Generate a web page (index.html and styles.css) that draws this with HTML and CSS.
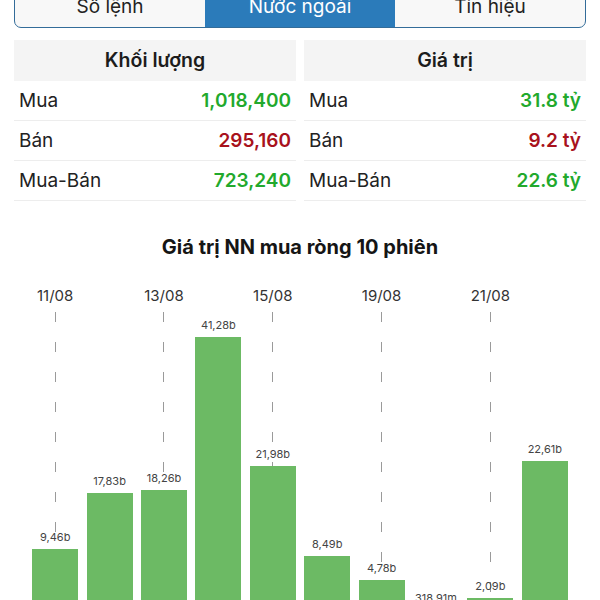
FILE: index.html
```html
<!DOCTYPE html>
<html lang="vi">
<head>
    <meta charset="UTF-8">
    <meta name="viewport" content="width=device-width, initial-scale=1.0">
    <title>Nước ngoài</title>
    <link rel="stylesheet" href="styles.css">
</head>
<body>

    <div class="tabs">
        <div class="tab">Sổ lệnh</div>
        <div class="tab active">Nước ngoài</div>
        <div class="tab">Tín hiệu</div>
    </div>

    <div class="summary">
        <div class="stats">
            <div class="stats-head">Khối lượng</div>
            <div class="stats-row"><span>Mua</span><span class="num up">1,018,400</span></div>
            <div class="stats-row"><span>Bán</span><span class="num down">295,160</span></div>
            <div class="stats-row"><span>Mua-Bán</span><span class="num up">723,240</span></div>
        </div>
        <div class="stats">
            <div class="stats-head">Giá trị</div>
            <div class="stats-row"><span>Mua</span><span class="num up">31.8 tỷ</span></div>
            <div class="stats-row"><span>Bán</span><span class="num down">9.2 tỷ</span></div>
            <div class="stats-row"><span>Mua-Bán</span><span class="num up">22.6 tỷ</span></div>
        </div>
    </div>

    <div class="chart">
        <h3 class="chart-title">Giá trị NN mua ròng 10 phiên</h3>
        <div class="chart-body" id="chart">
            <!-- bars are inserted here -->
        </div>
    </div>

    <script>
        const sessions = [
            { date: "11/08", value: 9.46,   label: "9,46b" },
            { date: "12/08", value: 17.83,  label: "17,83b" },
            { date: "13/08", value: 18.26,  label: "18,26b" },
            { date: "14/08", value: 41.28,  label: "41,28b" },
            { date: "15/08", value: 21.98,  label: "21,98b" },
            { date: "18/08", value: 8.49,   label: "8,49b" },
            { date: "19/08", value: 4.78,   label: "4,78b" },
            { date: "20/08", value: 0.319,  label: "318,91m" },
            { date: "21/08", value: 2.09,   label: "2,09b" },
            { date: "22/08", value: 22.61,  label: "22,61b" }
        ];

        const pxPerBillion = 6.66;

        let html = "";
        sessions.forEach((s, i) => {
            const marked = i % 2 === 0;
            const h = Math.round(s.value * pxPerBillion * 10) / 10;
            html += `<div class="slot${marked ? " marked" : ""}">
                <div class="date">${marked ? s.date : ""}</div>
                <div class="plot">
                    <div class="value">${s.label}</div>
                    <div class="bar" style="height: ${h}px"></div>
                </div>
            </div>`;
        });
        document.getElementById("chart").innerHTML = html;
    </script>

</body>
</html>
```

FILE: styles.css
```css
html, body {
    overflow: hidden;
}
body {
    margin: 0;
    font-family: Inter, "Noto Sans", sans-serif;
    background: #fff;
    color: #222;
}

/* segmented tabs */
.tabs {
    display: flex;
    box-sizing: border-box;
    height: 44px;
    margin: -16px 14px 0;
    border: 1px solid #336c99;
    border-radius: 7px;
    overflow: hidden;
    background: #f8f8f8;
}
.tab {
    flex: 1;
    display: flex;
    align-items: center;
    justify-content: center;
    font-size: 19px;
    color: #222;
}
.tab.active {
    background: #2b7bba;
    color: #fff;
}

/* summary tables */
.summary {
    display: flex;
    gap: 8px;
    margin: 12px 14px 0;
}
.stats {
    flex: 1;
}
.stats-head {
    height: 41px;
    line-height: 41px;
    background: #f4f4f4;
    text-align: center;
    font-size: 19.5px;
    font-weight: 600;
    color: #1c1c1c;
}
.stats-row {
    display: flex;
    justify-content: space-between;
    align-items: center;
    height: 39px;
    padding: 0 5px;
    border-bottom: 1px solid #ededed;
    font-size: 19px;
    color: #222;
}
.num {
    font-weight: 600;
}
.up {
    color: #22a92c;
}
.down {
    color: #a8121c;
}

/* chart */
.chart {
    margin-top: 34px;
}
.chart-title {
    margin: 0;
    text-align: center;
    font-size: 20px;
    line-height: 24px;
    font-weight: 700;
    color: #151515;
}
.chart-body {
    display: grid;
    grid-template-columns: repeat(10, 1fr);
    margin: 28px 28px 0;
}
.slot {
    display: flex;
    flex-direction: column;
    align-items: center;
}
.date {
    height: 18px;
    line-height: 18px;
    margin-bottom: 7px;
    font-size: 15px;
    color: #333;
}
.plot {
    width: 100%;
    height: 300px;
    display: flex;
    flex-direction: column;
    justify-content: flex-end;
    align-items: center;
}
.slot.marked .plot {
    background: linear-gradient(#9a9a9a 0 10px, transparent 10px) center top / 1px 30px repeat-y;
}
.value {
    margin-bottom: 5px;
    font-size: 11px;
    line-height: 14px;
    color: #444;
    white-space: nowrap;
}
.bar {
    width: 46px;
    background: #6cba64;
}
```
